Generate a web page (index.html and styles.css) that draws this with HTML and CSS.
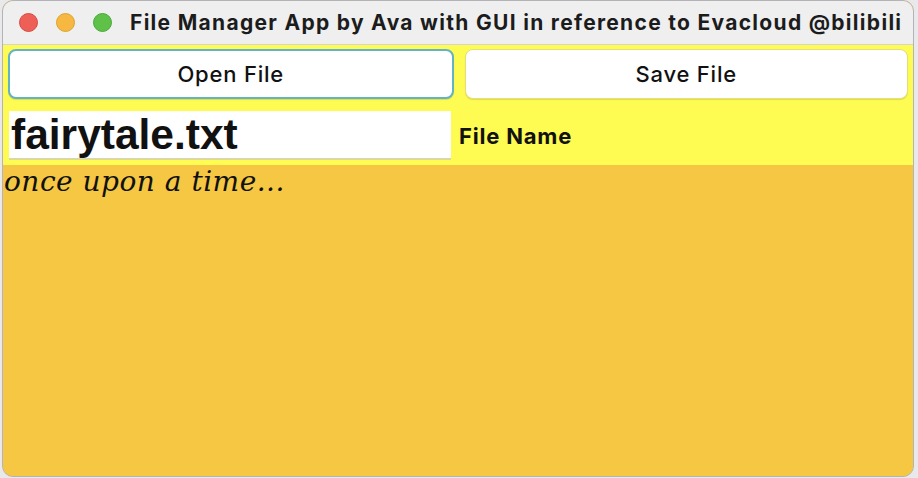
FILE: index.html
```html
<!DOCTYPE html>
<html>
<head>
<meta charset="utf-8">
<link rel="stylesheet" href="styles.css">
</head>
<body>
<div class="window">
  <div class="titlebar">
    <div class="lights">
      <span class="light red"></span>
      <span class="light yellow"></span>
      <span class="light green"></span>
    </div>
    <div class="title">File Manager App by Ava with GUI in reference to Evacloud @bilibili</div>
  </div>
  <div class="controls">
    <div class="buttons">
      <button class="btn focused">Open File</button>
      <button class="btn">Save File</button>
    </div>
    <div class="namerow">
      <div class="field">fairytale.txt</div>
      <div class="label">File Name</div>
    </div>
  </div>
  <div class="content">once upon a time...</div>
</div>
</body>
</html>
```
FILE: styles.css
```css
html, body {
  margin: 0;
  padding: 0;
  background: #e9e9ec;
}
body {
  width: 918px;
  height: 478px;
  overflow: hidden;
  padding: 0 4px 1px 2px;
  box-sizing: border-box;
}
.window {
  height: 477px;
  border: 1px solid #b4b4b8;
  border-radius: 11px;
  overflow: hidden;
  display: flex;
  flex-direction: column;
  box-sizing: border-box;
  background: #f5c743;
}
.titlebar {
  height: 44px;
  flex: none;
  background: #efeff0;
  border-bottom: 1px solid #d4d4d4;
  display: flex;
  align-items: center;
  box-sizing: border-box;
}
.lights {
  display: flex;
  gap: 18px;
  margin-left: 16px;
}
.light {
  width: 19px;
  height: 19px;
  border-radius: 50%;
  display: block;
  box-sizing: border-box;
}
.red { background: #ee5f58; border: 1px solid #d8493f; }
.yellow { background: #f6b840; border: 1px solid #dea22d; }
.green { background: #5fc148; border: 1px solid #48a83a; }
.title {
  margin-left: 18px;
  font-family: Inter, "Open Sans", sans-serif;
  font-weight: 700;
  font-size: 21px;
  color: #1c1c1c;
  white-space: nowrap;
  letter-spacing: 1.3px;
}
.controls {
  background: #fefb52;
  flex: none;
  padding: 4px 5px 5px 5px;
  display: flex;
  flex-direction: column;
  gap: 12px;
}
.buttons {
  display: flex;
  gap: 11px;
}
.btn {
  flex: 1;
  height: 50px;
  background: #ffffff;
  border: 1px solid #e4df7a;
  border-radius: 8px;
  font-family: Inter, "Open Sans", sans-serif;
  font-weight: 500;
  font-size: 22px;
  letter-spacing: 0.8px;
  color: #111;
  padding: 0;
  box-shadow: 0 1px 1px rgba(0,0,0,0.12);
}
.btn.focused {
  border: 2px solid #62b3c4;
}
.namerow {
  display: flex;
  align-items: center;
  gap: 8px;
}
.field {
  width: 442px;
  height: 49px;
  margin-left: 1px;
  background: #fff;
  border-bottom: 2px solid #dcd9a0;
  box-sizing: border-box;
  font-family: "Liberation Sans", Arial, sans-serif;
  font-weight: 700;
  font-size: 42.5px;
  line-height: 48px;
  padding-left: 2px;
  color: #111;
}
.label {
  font-family: Inter, "Open Sans", sans-serif;
  font-weight: 700;
  font-size: 22px;
  letter-spacing: 0.8px;
  color: #111;
}
.content {
  flex: 1;
  background: #f5c743;
  font-family: "DejaVu Serif", "Liberation Serif", serif;
  font-style: italic;
  font-size: 28px;
  letter-spacing: 0.5px;
  line-height: 33px;
  padding-left: 1px;
  color: #111;
}
```
